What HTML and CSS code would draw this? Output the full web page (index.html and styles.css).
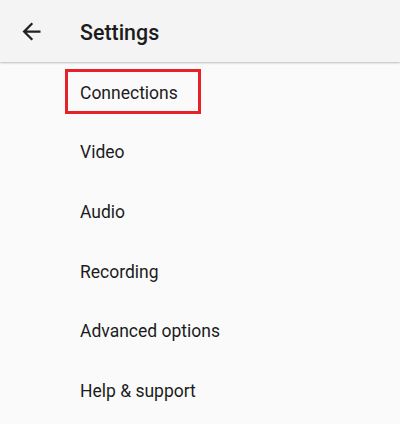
FILE: index.html
```html
<!DOCTYPE html>
<html lang="en">
<head>
  <meta charset="UTF-8" />
  <title>Settings</title>
  <link rel="stylesheet" href="styles.css">
</head>
<body>

  <div class="header">
    <span class="back">
      <svg viewBox="0 0 24 24" width="27" height="27"><path d="M20 11H7.83l5.59-5.59L12 4l-8 8 8 8 1.41-1.41L7.83 13H20v-2z" fill="#212121"/></svg>
    </span>
    <span class="title">Settings</span>
  </div>

  <div class="menu">
    <div class="item"><span class="highlight">Connections</span></div>
    <div class="item">Video</div>
    <div class="item">Audio</div>
    <div class="item">Recording</div>
    <div class="item">Advanced options</div>
    <div class="item">Help &amp; support</div>
  </div>

</body>
</html>
```
FILE: styles.css
```css
body {
  font-family: Roboto, sans-serif;
  background: #fafafa;
  margin: 0;
  padding: 0;
  color: #1c1c1c;
}

.header {
  display: flex;
  align-items: center;
  height: 62px;
  background: #f4f4f4;
  box-shadow: 0 1px 2px rgba(0,0,0,0.25);
  position: relative;
}

.back {
  display: flex;
  width: 27px;
  height: 27px;
  margin-left: 18px;
  margin-right: 35px;
}

.title {
  font-size: 21.4px;
  font-weight: 500;
  padding-top: 2px;
}

.menu {
  padding-left: 65px;
}

.item {
  display: flex;
  align-items: center;
  height: 59.6px;
  padding-left: 15px;
  font-size: 17.5px;
}

.menu .item + .item {
  padding-top: 2px;
  box-sizing: border-box;
  height: 59.6px;
}

.highlight {
  display: flex;
  align-items: center;
  box-sizing: border-box;
  width: 136px;
  height: 45px;
  margin-left: -15px;
  padding-left: 12px;
  padding-top: 2px;
  border: 3px solid #e8202a;
}
```
